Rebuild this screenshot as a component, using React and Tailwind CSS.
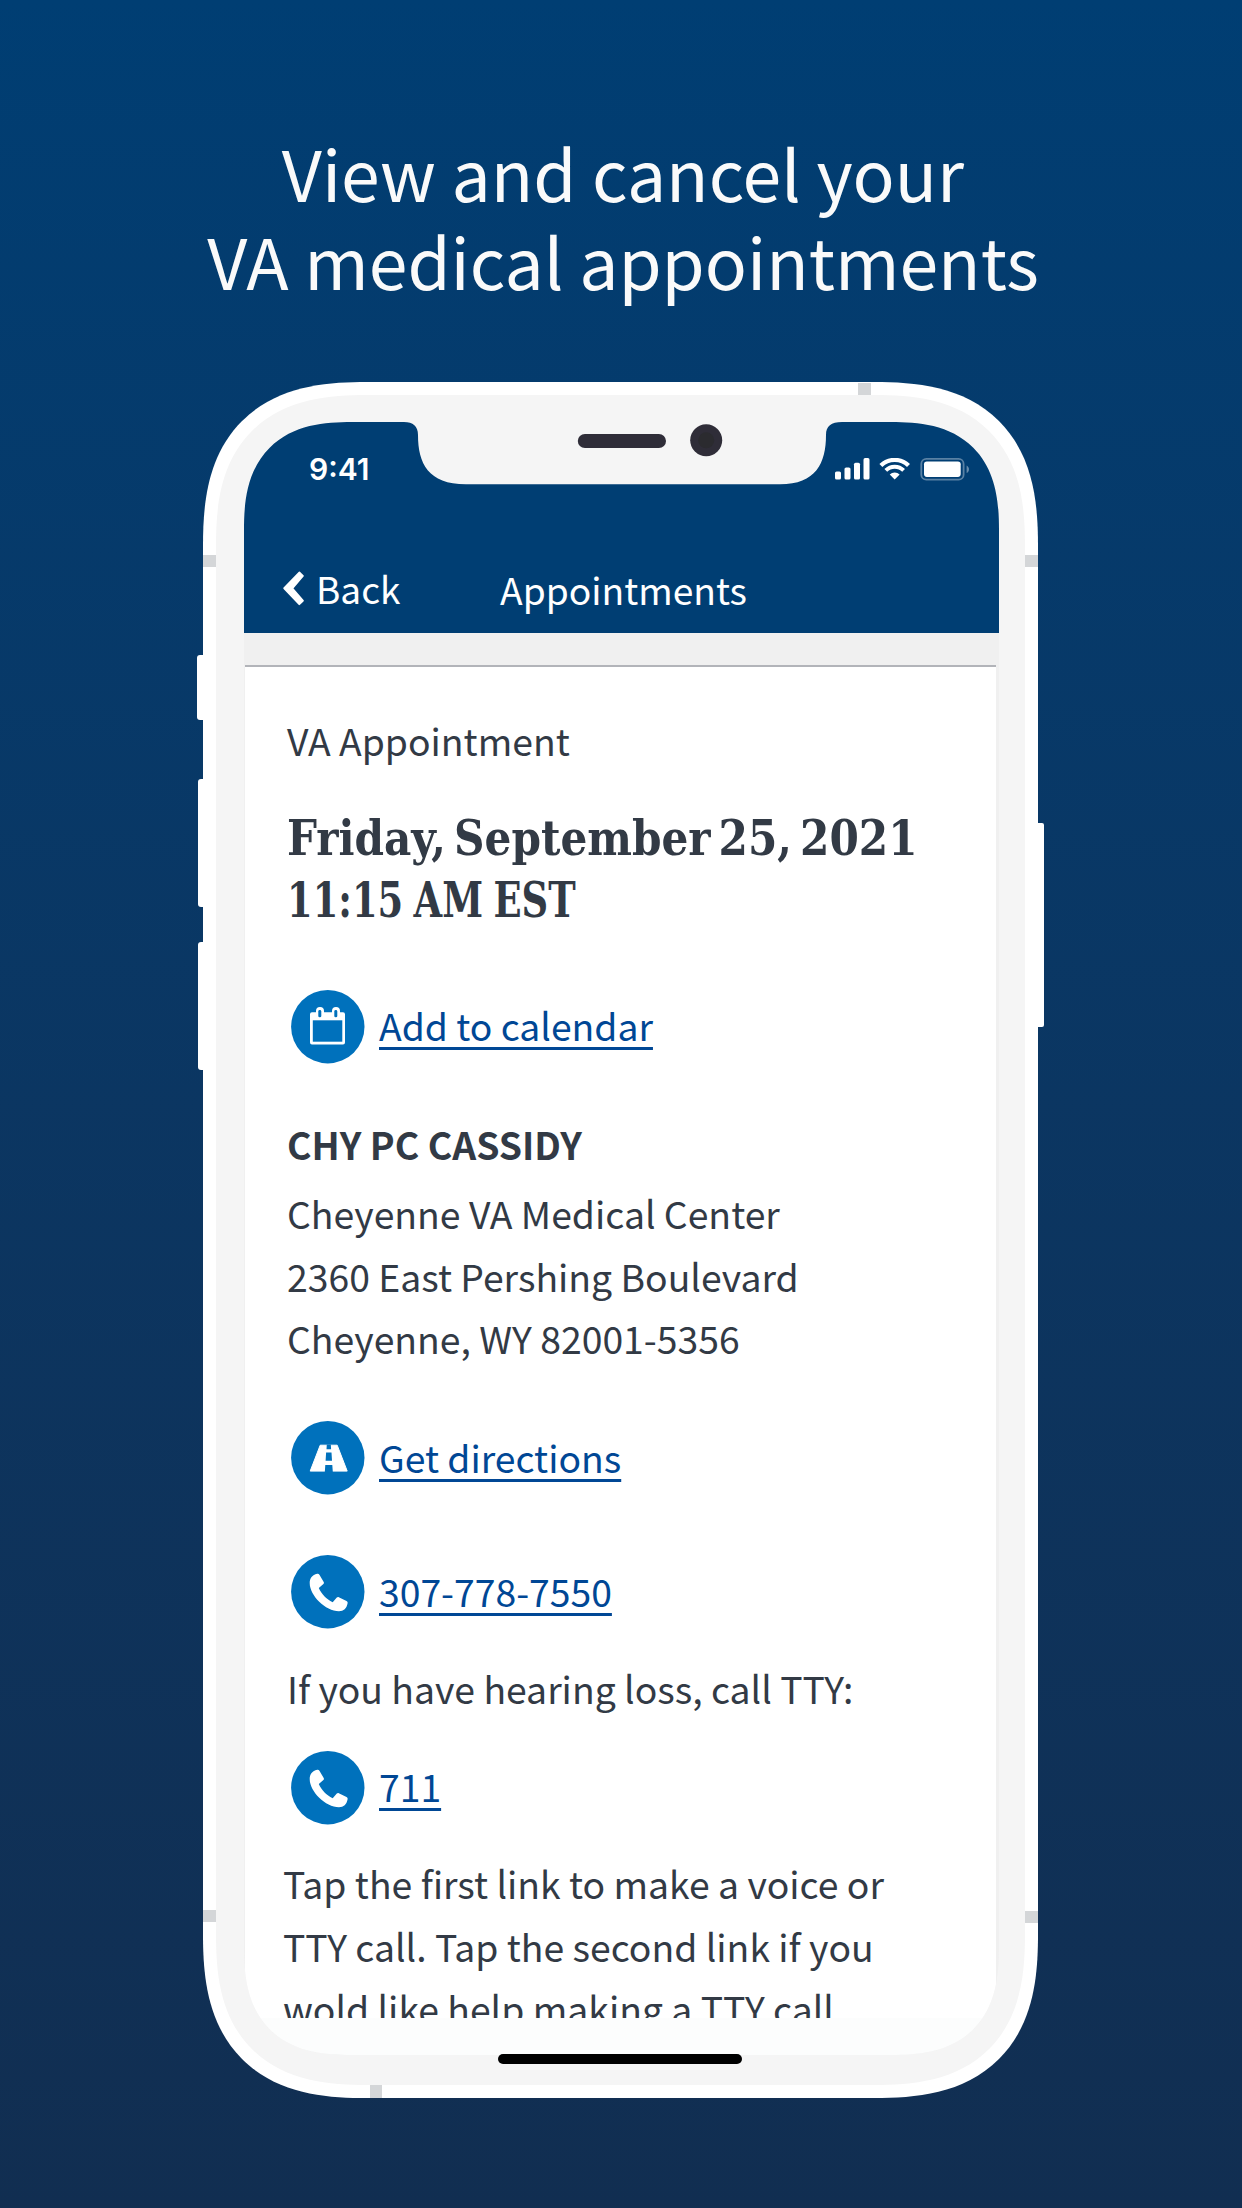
import React from "react";

function Tick({ className }) {
  return <span className={`block bg-[#d4d6d8] ${className}`} />;
}

function SideButton({ className }) {
  return <span className={`block bg-white ${className}`} />;
}

function CalendarIcon() {
  return (
    <g>
      <path fill="#fff" d="M21 22.3h4V21a4 4 0 0 1 8 0v1.3h8V21a4 4 0 0 1 8 0v1.3h3a2 2 0 0 1 2 2v28.2a2 2 0 0 1-2 2H21a2 2 0 0 1-2-2V24.3a2 2 0 0 1 2-2z" />
      <path fill="#0071bc" d="M21.8 30.3h29.5v21.4H21.8z" />
      <rect x="27.3" y="20" width="3" height="7.3" rx="1.4" fill="#0071bc" />
      <rect x="43.3" y="20" width="3" height="7.3" rx="1.4" fill="#0071bc" />
    </g>
  );
}

function RoadIcon() {
  return (
    <g>
      <path fill="#fff" stroke="#fff" strokeWidth="1" strokeLinejoin="round" d="M29.2 24.2h17l10 25.9h-37z" />
      <path fill="#0071bc" d="M35.8 23.5h4l.3 4.8h-4.6zM35.1 31.5h5.4l.5 8.3h-6.4zM34.3 44h7l.5 7h-8z" />
    </g>
  );
}

function PhoneIcon() {
  return (
    <path
      fill="#fff"
      d="M26.2 18.8c.9-.2 1.7 0 2.2.9l4.3 7.4c.4.8.3 1.4-.3 2l-4.6 3.9c2.6 5.9 7.6 11.2 13.9 14.2l4.1-4.6c.6-.6 1.2-.7 2-.4l7.7 3.9c1 .5 1.3 1.2 1.1 2.2-.9 5.3-4 8-8.6 8C34.5 56.3 18.7 40.7 18.7 28.1c0-4.7 2.500-8.3 7.5-9.3z"
    />
  );
}

function ActionLink({ icon, label, className }) {
  return (
    <a className={`flex h-[73px] items-center gap-[14px] pl-[4px] text-[37.3px] ${className}`}>
      <svg className="h-[74px] w-[74px] shrink-0" viewBox="0 0 74 74">
        <circle cx="36.8" cy="36.7" r="36.7" fill="#0071bc" />
        {icon}
      </svg>
      <span className="pb-[2px] text-[#004795] underline decoration-[3px] underline-offset-[6px] [text-decoration-skip-ink:none]">
        {label}
      </span>
    </a>
  );
}

function StatusIcons() {
  return (
    <svg className="h-[23px] w-[135px]" viewBox="0 0 135 23" fill="#fff">
      <rect x="0" y="13.5" width="6" height="8" rx="1.6" />
      <rect x="9.5" y="9.5" width="6" height="12" rx="1.6" />
      <rect x="19" y="4.7" width="6" height="16.8" rx="1.6" />
      <rect x="28.5" y="0.1" width="6" height="21.4" rx="1.6" />
      <path fill="none" stroke="#fff" strokeWidth="4.2" d="M45.9 7.6A19.5 19.5 0 0 1 73.5 7.6" />
      <path fill="none" stroke="#fff" strokeWidth="3.9" d="M50.8 12.4A12.6 12.6 0 0 1 68.6 12.4" />
      <path d="M59.7 21.600l-4.950-5A7 7 0 0 1 64.650 16.600z" />
      <rect x="86.3" y="0.9" width="42.3" height="20.8" rx="5" fill="none" stroke="#fff" strokeOpacity=".35" strokeWidth="1.8" />
      <rect x="89" y="3.5" width="36.7" height="15.4" rx="2.8" />
      <path fillOpacity=".4" d="M131.6 7.5c3.2 1.6 3.2 6 0 7.6z" />
    </svg>
  );
}

function Header() {
  return (
    <header className="flex h-[211px] shrink-0 flex-col justify-between bg-[#003e73] pt-[29px] pb-[19px] text-white">
      <div className="flex items-center justify-between pr-[29px] pl-[65px]">
        <span className="font-['Inter',sans-serif] text-[30px] leading-[36px] font-semibold">9:41</span>
        <StatusIcons />
      </div>
      <div className="grid grid-cols-[1fr_auto_1fr] items-start pr-[35px] pl-[39px] text-[37.2px] leading-[50px]">
        <div className="flex items-center gap-[12px]">
          <svg className="h-[35px] w-[21px]" viewBox="0 0 21 35">
            <path
              fill="#fff"
              stroke="#fff"
              strokeWidth="2"
              strokeLinejoin="round"
              d="M1.3 17.3L16.3 1.6 19.8 4.9 9.2 17.3 19.8 29.7 16.3 33.1z"
            />
          </svg>
          <span className="text-[37px]">Back</span>
        </div>
        <h2 className="pt-px">Appointments</h2>
      </div>
    </header>
  );
}

function Notch() {
  return (
    <svg className="absolute -top-px left-[160px] h-[65px] w-[438px]" viewBox="0 0 438 65">
      <path fill="#f5f5f5" d="M0 0V1C9 1 14 5 14 14C14 42 24 63.3 62 63.3H376C412 63.3 422 42 422 14C422 5 427 1 438 1V0z" />
      <rect x="173.8" y="12.9" width="88.2" height="14.2" rx="7.1" fill="#2f2d38" />
      <circle cx="302.2" cy="19.3" r="16" fill="#2f2d38" />
      <circle cx="302.2" cy="19.3" r="8" fill="#2b2b2f" />
    </svg>
  );
}

function Appointment() {
  return (
    <main className="h-[1351px] w-[751px] shrink-0 overflow-hidden bg-white px-[42px] pt-[42px] text-[37.35px] leading-[62.5px] whitespace-nowrap text-[#323a45]">
      <p>VA Appointment</p>
      <h3 className="mt-[35px] font-['DejaVu_Serif_Condensed','DejaVu_Serif',serif] text-[49.4px] leading-[62px] font-bold">
        <span className="block origin-left scale-x-[0.95] [word-spacing:-7px]">Friday, September 25, 2021</span>
        <span className="block origin-left scale-x-[0.83] [word-spacing:-3px]">11:15 AM EST</span>
      </h3>
      <ActionLink className="mt-[59.5px]" icon={<CalendarIcon />} label="Add to calendar" />
      <p className="mt-[50px] font-bold">CHY PC CASSIDY</p>
      <address className="mt-[6.5px] not-italic">
        Cheyenne VA Medical Center
        <br />
        2360 East Pershing Boulevard
        <br />
        Cheyenne, WY 82001-5356
      </address>
      <ActionLink className="mt-[52px]" icon={<RoadIcon />} label="Get directions" />
      <ActionLink className="mt-[61px]" icon={<PhoneIcon />} label="307-778-7550" />
      <p className="mt-[28px]">If you have hearing loss, call TTY:</p>
      <ActionLink className="mt-[32px]" icon={<PhoneIcon />} label="711" />
      <p className="mt-[28px] -ml-[4px]">
        Tap the first link to make a voice or
        <br />
        TTY call. Tap the second link if you
        <br />
        wold like help making a TTY call
      </p>
    </main>
  );
}

function Screen() {
  return (
    <div className="relative h-full">
      <div className="flex h-full flex-col overflow-hidden rounded-[108px] bg-[#f0f0f0] [corner-shape:superellipse(1.35)]">
        <Header />
        <div className="flex flex-1 flex-col pl-px">
          <div className="h-[34px] w-[751px] shrink-0 border-b-2 border-[#b2b4b9]" />
          <Appointment />
          <footer className="flex-1 bg-[#fcfdfd]" />
        </div>
      </div>
      <Notch />
      <span className="absolute -bottom-[9px] left-[254px] h-[10px] w-[244px] rounded-full bg-black" />
    </div>
  );
}

export default function App() {
  return (
    <div className="flex h-[2208px] w-[1242px] flex-col items-center gap-[78.5px] overflow-hidden bg-linear-to-b from-[#003e73] to-[#112e51] pt-[127.5px] font-['Noto_Sans_CJK_SC',sans-serif]">
      <h1 className="pl-[4px] text-center text-[69.7px] leading-[88px] text-[#fafafa]">
        View and cancel your
        <br />
        VA medical appointments
      </h1>

      <div className="mr-px flex h-[1716px] shrink-0">
        <div className="flex w-[6px] flex-col items-end pt-[273px]">
          <SideButton className="h-[65px] w-[6px] rounded-l-[3px]" />
          <SideButton className="mt-[59px] h-[128px] w-[5px] rounded-l-[3px]" />
          <SideButton className="mt-[35px] h-[128px] w-[5px] rounded-l-[3px]" />
        </div>

        <div className="grid h-full w-[835px] grid-cols-[13px_1fr_13px] grid-rows-[13px_1fr_13px] overflow-hidden rounded-[164px] bg-white [corner-shape:superellipse(1.35)]">
          <div className="col-span-3 flex items-end pl-[655px]">
            <Tick className="h-[12px] w-[13px]" />
          </div>
          <div className="flex flex-col gap-[1343px] pt-[160px]">
            <Tick className="h-[12px]" />
            <Tick className="h-[12px]" />
          </div>
          <div className="rounded-[151px] bg-[#f5f5f5] pt-[27px] pr-[26px] pb-[30px] pl-[28px] [corner-shape:superellipse(1.35)]">
            <Screen />
          </div>
          <div className="flex flex-col gap-[1344px] pt-[160px]">
            <Tick className="h-[12px]" />
            <Tick className="h-[12px]" />
          </div>
          <div className="col-span-3 flex pl-[167px]">
            <Tick className="w-[12px]" />
          </div>
        </div>

        <div className="w-[6px] pt-[441px]">
          <SideButton className="h-[204px] w-[6px] rounded-r-[2px]" />
        </div>
      </div>
    </div>
  );
}
